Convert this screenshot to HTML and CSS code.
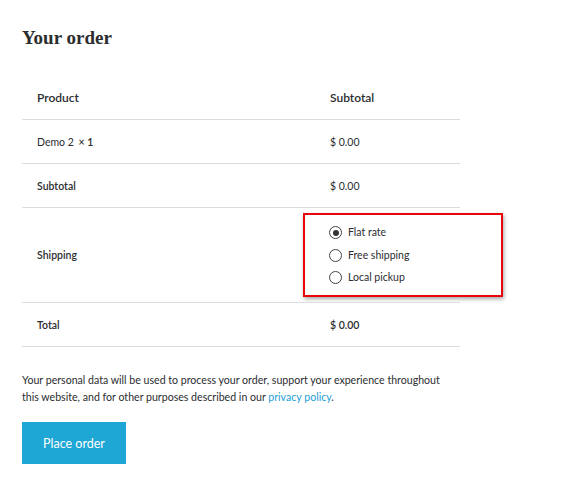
FILE: index.html
```html
<!DOCTYPE html>
<html>
<head>
<meta charset="utf-8">
<link rel="stylesheet" href="styles.css">
</head>
<body>
<div class="page">
  <h3 class="title">Your order</h3>
  <table class="order">
    <colgroup><col class="col1"><col class="col2"></colgroup>
    <thead>
      <tr><th class="c1">Product</th><th class="c2">Subtotal</th></tr>
    </thead>
    <tbody>
      <tr class="item"><td class="c1">Demo 2 <strong class="qty">× 1</strong></td><td class="c2">$ 0.00</td></tr>
    </tbody>
    <tfoot>
      <tr class="sub"><th class="c1">Subtotal</th><td class="c2">$ 0.00</td></tr>
      <tr class="ship"><th class="c1">Shipping</th>
        <td class="c2">
          <div class="methods">
            <label class="method"><span class="radio checked"></span>Flat rate</label>
            <label class="method"><span class="radio"></span>Free shipping</label>
            <label class="method"><span class="radio"></span>Local pickup</label>
          </div>
        </td>
      </tr>
      <tr class="total"><th class="c1">Total</th><td class="c2"><strong>$ 0.00</strong></td></tr>
    </tfoot>
  </table>
  <p class="privacy">Your personal data will be used to process your order, support your experience throughout this website, and for other purposes described in our <a href="#">privacy policy</a>.</p>
  <button class="place">Place order</button>
</div>
</body>
</html>
```

FILE: styles.css
```css
html, body { margin: 0; padding: 0; background: #fff; }
body { font-family: Lato, "Open Sans", sans-serif; color: #2b2d2f; }
.page { padding: 26px 0 0 22px; width: 440px; }
.title {
  font-family: "Liberation Serif", serif;
  font-weight: bold;
  font-size: 19px;
  margin: 0 0 23px 0;
  line-height: 24px;
  color: #2b2d2f;
}
.order { width: 438px; border-collapse: collapse; table-layout: fixed; font-size: 10.5px; }
.col1 { width: 293px; }
.col2 { width: 145px; }
.order th, .order td { text-align: left; padding: 0 0 0 15px; border-bottom: 1px solid #dcdcdc; vertical-align: middle; }
.order thead th { font-size: 12px; font-weight: 600; height: 44px; padding-top: 2px; }
.order .item td, .order .sub th, .order .sub td, .order .total th, .order .total td { height: 43px; }
.order tfoot th { font-weight: 600; }
.order .qty { font-weight: 600; margin-left: 2px; }
.order .total strong { font-weight: 600; }
.order .ship th, .order .ship td { height: 94px; }
.methods {
  margin-left: -27px;
  width: 200px;
  border: 2px solid #e8060c;
  box-shadow: 1px 2px 4px rgba(0,0,0,0.35);
  padding: 11px 0 11px 24px;
  box-sizing: border-box;
  display: flex;
  flex-direction: column;
  gap: 9.5px;
}
.method { display: flex; align-items: center; font-size: 10.5px; line-height: 13px; }
.radio {
  width: 11px; height: 11px; border: 1px solid #444; border-radius: 50%;
  margin-right: 6px; position: relative; flex: none;
}
.radio.checked::after {
  content: ""; position: absolute; left: 2.5px; top: 2.5px; width: 6px; height: 6px;
  background: #333; border-radius: 50%;
}
.privacy { font-size: 10.6px; line-height: 16.5px; margin: 25px 0 17px 0; width: 425px; }
.privacy a { color: #1e9fd4; text-decoration: none; }
.place {
  display: block; background: #1ea6d5; color: #fff; border: 0;
  font-family: Lato, sans-serif; font-size: 12.5px; width: 104px; height: 42px; padding: 0;
}
```
